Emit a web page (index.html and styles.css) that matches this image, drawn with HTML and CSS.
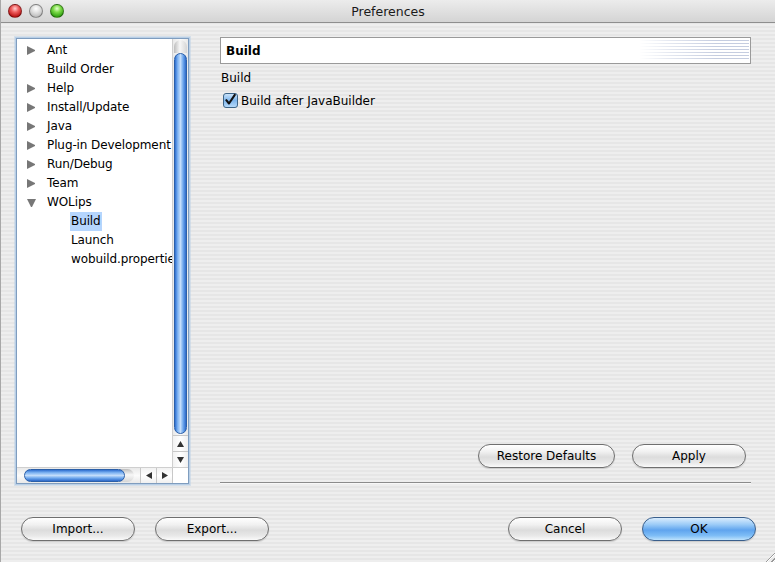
FILE: index.html
```html
<!DOCTYPE html>
<html>
<head>
<meta charset="utf-8">
<title>Preferences</title>
<link rel="stylesheet" href="styles.css">
</head>
<body>
<div class="window">
  <div class="titlebar">
    <div class="lights">
      <span class="light red"></span>
      <span class="light gray"></span>
      <span class="light green"></span>
    </div>
    <div class="title">Preferences</div>
  </div>

  <div class="content">
    <div class="sidebar">
      <div class="tree-area">
        <ul class="tree">
          <li class="row"><span class="tri right"></span><span class="label">Ant</span></li>
          <li class="row"><span class="tri none"></span><span class="label">Build Order</span></li>
          <li class="row"><span class="tri right"></span><span class="label">Help</span></li>
          <li class="row"><span class="tri right"></span><span class="label">Install/Update</span></li>
          <li class="row"><span class="tri right"></span><span class="label">Java</span></li>
          <li class="row"><span class="tri right"></span><span class="label">Plug-in Development</span></li>
          <li class="row"><span class="tri right"></span><span class="label">Run/Debug</span></li>
          <li class="row"><span class="tri right"></span><span class="label">Team</span></li>
          <li class="row"><span class="tri down"></span><span class="label">WOLips</span></li>
          <li class="row child"><span class="label selected">Build</span></li>
          <li class="row child"><span class="label">Launch</span></li>
          <li class="row child"><span class="label">wobuild.properties</span></li>
        </ul>
        <div class="vscroll">
          <div class="vcap"></div>
          <div class="vthumb"></div>
          <div class="varrow"><svg width="9" height="8" viewBox="0 0 9 8"><path d="M4.5 1 L8 7 L1 7 Z" fill="#333"/></svg></div>
          <div class="varrow"><svg width="9" height="8" viewBox="0 0 9 8"><path d="M1 1 L8 1 L4.5 7 Z" fill="#333"/></svg></div>
        </div>
      </div>
      <div class="hscroll">
        <div class="htrack">
          <div class="hthumb"></div>
          <div class="hcap"></div>
        </div>
        <div class="harrow"><svg width="8" height="9" viewBox="0 0 8 9"><path d="M1 4.5 L7 1 L7 8 Z" fill="#333"/></svg></div>
        <div class="harrow"><svg width="8" height="9" viewBox="0 0 8 9"><path d="M1 1 L7 4.5 L1 8 Z" fill="#333"/></svg></div>
        <div class="corner"></div>
      </div>
    </div>

    <div class="main">
      <div class="page-header">
        <span class="page-title">Build</span>
        <div class="stipple"></div>
      </div>
      <div class="group-label">Build</div>
      <div class="check-row">
        <svg class="checkbox" width="15" height="15" viewBox="0 0 15 15">
          <defs>
            <linearGradient id="cb" x1="0" y1="0" x2="0" y2="1">
              <stop offset="0" stop-color="#cfe6fb"/>
              <stop offset="0.5" stop-color="#7fb6ec"/>
              <stop offset="1" stop-color="#b9dcfb"/>
            </linearGradient>
          </defs>
          <rect x="0.5" y="0.5" width="14" height="14" rx="2.5" fill="url(#cb)" stroke="#3d6487"/>
          <path d="M3.3 7.2 L6 10.5 L11.8 1.8" fill="none" stroke="#111" stroke-width="2.1" stroke-linecap="round" stroke-linejoin="round"/>
        </svg>
        <span class="check-label">Build after JavaBuilder</span>
      </div>
      <div class="spacer"></div>
      <div class="page-buttons">
        <button class="btn restore">Restore Defaults</button>
        <button class="btn apply">Apply</button>
      </div>
      <div class="separator"></div>
    </div>
  </div>

  <div class="footer">
    <div class="footer-left">
      <button class="btn wide">Import...</button>
      <button class="btn wide">Export...</button>
    </div>
    <div class="footer-right">
      <button class="btn wide">Cancel</button>
      <button class="btn wide primary">OK</button>
    </div>
  </div>
  <div class="grip"></div>
</div>
</body>
</html>
```

FILE: styles.css
```css
* { box-sizing: border-box; }

html, body {
  margin: 0;
  padding: 0;
}

body {
  width: 775px;
  height: 562px;
  overflow: hidden;
  font-family: "DejaVu Sans", "Liberation Sans", sans-serif;
  font-size: 12px;
  color: #000;
}

.window {
  position: relative;
  width: 775px;
  height: 562px;
  display: flex;
  flex-direction: column;
  background: repeating-linear-gradient(to bottom, #eeeeee 0px, #eeeeee 2px, #e6e6e6 2px, #e6e6e6 4px);
  border-left: 1px solid #a8a8a8;
}

/* Title bar */
.titlebar {
  position: relative;
  height: 23px;
  flex: none;
  display: flex;
  align-items: center;
  justify-content: center;
  background: linear-gradient(to bottom, #ececec 0%, #e0e0e0 50%, #d4d4d4 100%);
  border-bottom: 1px solid #8e8e8e;
}

.lights {
  position: absolute;
  left: 7px;
  top: 4px;
  display: flex;
  gap: 7px;
}

.light {
  width: 14px;
  height: 14px;
  border-radius: 50%;
  border: 1px solid rgba(0,0,0,0.35);
}

.light.red {
  background: radial-gradient(circle at 50% 30%, #ffd0d0 0%, #f06060 35%, #b81010 80%, #8a0000 100%);
}

.light.gray {
  background: radial-gradient(circle at 50% 30%, #ffffff 0%, #e4e4e4 35%, #b8b8b8 85%, #a0a0a0 100%);
}

.light.green {
  background: radial-gradient(circle at 50% 30%, #e6ffd0 0%, #7edc4a 35%, #2f9e10 80%, #1d7005 100%);
}

.title {
  font-size: 12.5px;
  color: #1a1a1a;
  padding-top: 1px;
}

/* Content */
.content {
  flex: none;
  display: flex;
  align-items: flex-start;
  padding: 14px 0 0 15px;
}

.sidebar {
  width: 173px;
  height: 446px;
  margin-top: 1px;
  display: flex;
  flex-direction: column;
  background: #fff;
  border: 1px solid #7f9dbf;
  box-shadow: 0 0 0 1px #b9cfe6, 0 0 0 2px rgba(185,207,230,0.5);
}

.tree-area {
  flex: 1;
  display: flex;
  min-height: 0;
}

.tree {
  list-style: none;
  margin: 0;
  padding: 2px 0 0 0;
  flex: 1;
  overflow: hidden;
  white-space: nowrap;
}

.row {
  height: 19px;
  display: flex;
  align-items: center;
  padding-left: 10px;
}

.row.child {
  padding-left: 53px;
}

.tri {
  width: 8px;
  height: 9px;
  margin-right: 11px;
  flex: none;
}

.tri.right {
  border-style: solid;
  border-width: 4.5px 0 4.5px 8px;
  border-color: transparent transparent transparent #777;
}

.tri.down {
  border-style: solid;
  border-width: 8px 4.5px 0 4.5px;
  border-color: #777 transparent transparent transparent;
  width: 9px;
  height: 8px;
  margin-right: 10px;
}

.label {
  line-height: 19px;
  padding: 0 1px;
  letter-spacing: -0.1px;
}

.label.selected {
  background: #b5d5fd;
}

/* vertical scrollbar */
.vscroll {
  width: 16px;
  flex: none;
  display: flex;
  flex-direction: column;
  background: linear-gradient(to right, #e9e9e9, #fbfbfb 50%, #e9e9e9);
  border-left: 1px solid #cfcfcf;
}

.vcap {
  height: 13px;
  margin: 1px 1px 0;
  border-radius: 7px 7px 0 0;
  background: linear-gradient(to right, #bdbdbd, #f7f7f7 45%, #d6d6d6);
}

.vthumb {
  flex: 1;
  margin: 0 1px 1px;
  border-radius: 7px;
  background: linear-gradient(to right, #2f6fd0 0%, #7fb4f3 25%, #c3ddfb 50%, #6aa4ec 75%, #2c68c8 100%);
  border: 1px solid #2b5fa8;
}

.varrow {
  height: 16px;
  display: flex;
  align-items: center;
  justify-content: center;
  border-top: 1px solid #c8c8c8;
  background: linear-gradient(to right, #f2f2f2, #ffffff 50%, #f0f0f0);
}

/* horizontal scrollbar */
.hscroll {
  height: 16px;
  flex: none;
  display: flex;
  border-top: 1px solid #cfcfcf;
  background: linear-gradient(to bottom, #e9e9e9, #fbfbfb 50%, #e9e9e9);
}

.htrack {
  flex: 1;
  display: flex;
  padding: 1px 0 1px 7px;
}

.hthumb {
  position: relative;
  z-index: 1;
  width: 101px;
  border-radius: 7px;
  border: 1px solid #2b5fa8;
  background: linear-gradient(to bottom, #2f6fd0 0%, #7fb4f3 25%, #c3ddfb 50%, #6aa4ec 75%, #2c68c8 100%);
}

.hcap {
  position: relative;
  z-index: 0;
  width: 15px;
  margin-left: -6px;
  border-radius: 0 7px 7px 0;
  background: linear-gradient(to bottom, #bdbdbd, #f7f7f7 45%, #d6d6d6);
}

.harrow {
  width: 16px;
  flex: none;
  display: flex;
  align-items: center;
  justify-content: center;
  border-left: 1px solid #c8c8c8;
  background: linear-gradient(to bottom, #f2f2f2, #ffffff 50%, #f0f0f0);
}

.corner {
  width: 16px;
  flex: none;
  background: #fff;
  border-left: 1px solid #c8c8c8;
}

/* Main page */
.main {
  width: 531px;
  height: 448px;
  margin-left: 31px;
  display: flex;
  flex-direction: column;
}

.page-header {
  position: relative;
  height: 27px;
  flex: none;
  display: flex;
  align-items: center;
  padding-left: 5px;
  background: #fff;
  border: 1px solid #9a9a9a;
  overflow: hidden;
}

.page-title {
  font-weight: bold;
  font-size: 12px;
}

.stipple {
  position: absolute;
  right: 1px;
  top: 2px;
  bottom: 2px;
  width: 110px;
  background: repeating-linear-gradient(to bottom, #c5cde0 0px, #c5cde0 1px, transparent 1px, transparent 3px);
  -webkit-mask-image: linear-gradient(to right, transparent 0%, rgba(0,0,0,0.5) 30%, #000 70%);
  mask-image: linear-gradient(to right, transparent 0%, rgba(0,0,0,0.5) 30%, #000 70%);
}

.group-label {
  margin-top: 6px;
  height: 17px;
  line-height: 17px;
  padding-left: 1px;
}

.check-row {
  display: flex;
  align-items: center;
  margin-top: 6px;
  padding-left: 3px;
  gap: 3px;
}

.checkbox {
  flex: none;
}

.spacer {
  flex: 1;
}

.page-buttons {
  display: flex;
  justify-content: flex-end;
  gap: 17px;
  padding-right: 5px;
}

.separator {
  margin-top: 14px;
  margin-bottom: 1px;
  height: 1px;
  background: #8c8c8c;
  border-bottom: 1px solid #f8f8f8;
  box-sizing: content-box;
}

/* Buttons */
.btn {
  height: 24px;
  border-radius: 12px;
  border: 1px solid #6f6f6f;
  font-family: inherit;
  font-size: 12px;
  color: #000;
  padding: 0 10px;
  background: linear-gradient(to bottom, #ffffff 0%, #f1f1f1 30%, #dcdcdc 55%, #e8e8e8 80%, #fafafa 100%);
  box-shadow: 0 1px 1px rgba(0,0,0,0.15);
}

.btn.restore { width: 137px; }
.btn.apply { width: 114px; }
.btn.wide { width: 114px; }

.btn.primary {
  border-color: #3a5f8c;
  background: linear-gradient(to bottom, #d9ecfd 0%, #9bcbf7 30%, #5fa4ee 55%, #7ebdf6 80%, #bde2fd 100%);
}

/* Footer */
.footer {
  flex: none;
  display: flex;
  justify-content: space-between;
  padding: 32px 19px 0 20px;
}

.footer-left, .footer-right {
  display: flex;
  gap: 20px;
}

.grip {
  position: absolute;
  right: 0;
  bottom: 0;
  width: 12px;
  height: 12px;
  background: repeating-linear-gradient(135deg, transparent 0px, transparent 2px, #999 2px, #999 3px, #fff 3px, #fff 4px);
  clip-path: polygon(100% 0, 100% 100%, 0 100%);
}
```
